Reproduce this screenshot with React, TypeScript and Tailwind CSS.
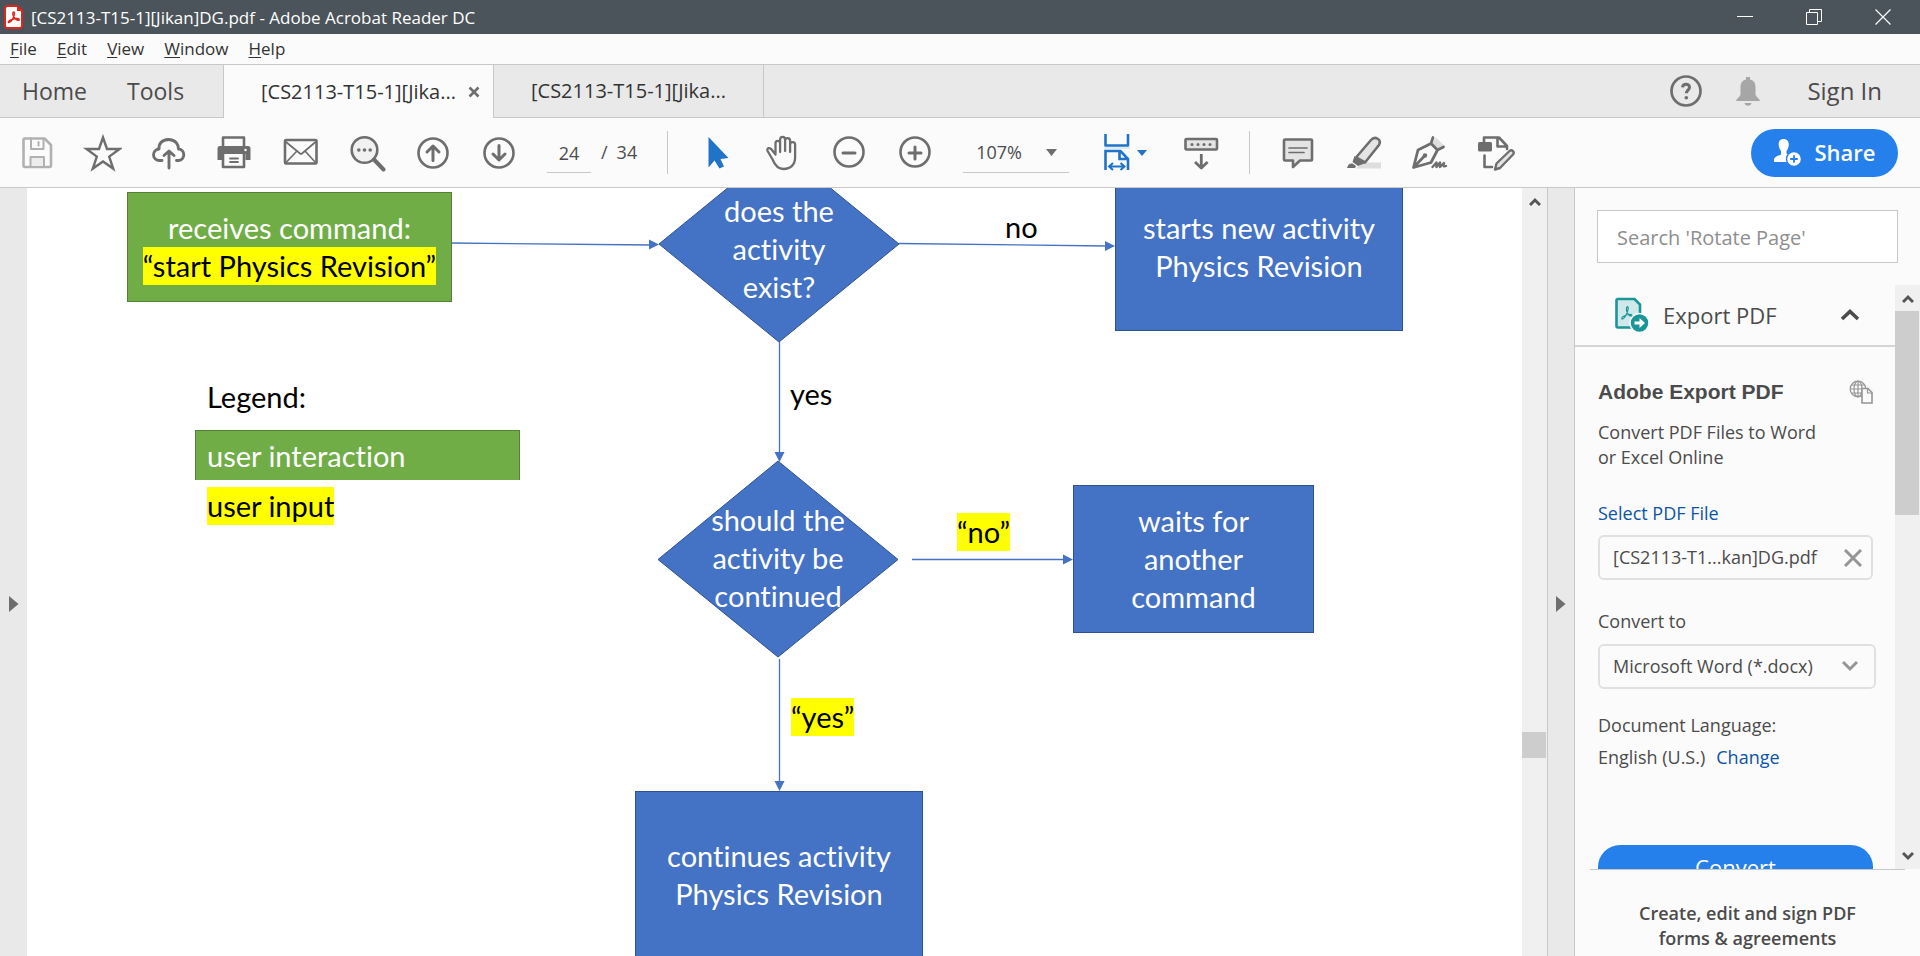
import type { ReactNode } from "react";

const GREY = "#6e6e6e";

function Icon({ children }: { children: ReactNode }) {
  return (
    <svg width="40" height="40" viewBox="0 0 40 40" fill="none" stroke={GREY} strokeWidth="2.6" strokeLinecap="round" strokeLinejoin="round" aria-hidden="true">
      {children}
    </svg>
  );
}

function ToolButton({ label, children }: { label: string; children: ReactNode }) {
  return (
    <button type="button" aria-label={label} className="flex w-[66px] shrink-0 items-center justify-center">
      <Icon>{children}</Icon>
    </button>
  );
}

function TitleBar() {
  return (
    <header className="flex h-[34px] shrink-0 items-center bg-[#4b545a] text-white">
      <svg width="20" height="24" viewBox="0 0 20 24" className="ml-1" aria-hidden="true">
        <path d="M3.500 1h9.500l5 5v14.500a2.500 2.500 0 0 1-2.500 2.500h-12a2.500 2.500 0 0 1-2.500-2.500v-17a2.500 2.500 0 0 1 2.500-2.500z" fill="#fff" stroke="#e3241b" strokeWidth="2" />
        <path d="M13 1v5h5" fill="#e3241b" />
        <path d="M4.500 17.500c-1-1.500 3-3.500 8-4 3-.3 3.500 1.800 1.800 1.900-2.300.1-5.800-4-5.500-7.400.2-1.400 1.700-1.300 1.700.3 0 3-3.500 10-6 9.200z" fill="none" stroke="#e3241b" strokeWidth="1.400" />
      </svg>
      <h1 className="ml-[7px] flex-1 pt-px text-[17px] leading-[24px]">[CS2113-T15-1][Jikan]DG.pdf - Adobe Acrobat Reader DC</h1>
      <button type="button" aria-label="Minimize" className="flex h-full w-[69px] items-center justify-center">
        <svg width="16" height="16" viewBox="0 0 16 16" stroke="#fff"><path d="M0 7.500h16" /></svg>
      </button>
      <button type="button" aria-label="Restore" className="flex h-full w-[69px] items-center justify-center">
        <svg width="16" height="16" viewBox="0 0 16 16" stroke="#fff" fill="none"><path d="M.5 3.500h11v12h-11zM3.500 3.500v-3h12v12h-3.500" /></svg>
      </button>
      <button type="button" aria-label="Close" className="mr-[3px] flex h-full w-[69px] items-center justify-center">
        <svg width="16" height="16" viewBox="0 0 16 16" stroke="#fff" strokeWidth="1.200"><path d="M.5.500l15 15M15.500.500l-15 15" /></svg>
      </button>
    </header>
  );
}

function MenuBar() {
  const items = ["File", "Edit", "View", "Window", "Help"];
  return (
    <nav className="flex h-[31px] shrink-0 items-center gap-5 border-b border-[#c8c8c8] bg-[#fbfbfb] pl-[10px] text-[17px] leading-[24px] text-[#333]">
      {items.map((item) => (
        <button type="button" key={item}>
          <span className="underline underline-offset-2">{item[0]}</span>
          {item.slice(1)}
        </button>
      ))}
    </nav>
  );
}

function TabBar() {
  return (
    <div className="flex h-[53px] shrink-0 bg-[#e9e9e9]">
      <div className="flex w-[224px] items-center gap-10 border-r border-b border-[#c8c8c8] pl-[22px] text-[23px] text-[#4b4b4b]">
        <button type="button">Home</button>
        <button type="button">Tools</button>
      </div>
      <div className="flex w-[270px] items-center border-r border-[#c8c8c8] bg-[#fbfbfb] pl-[37px] text-[20px] text-[#333]">
        <button type="button" className="w-[206px] text-left">[CS2113-T15-1][Jika...</button>
        <button type="button" aria-label="Close tab">
          <svg width="14" height="14" viewBox="0 0 14 14" stroke={GREY} strokeWidth="2.600"><path d="M2.500 2.500l9 9M11.500 2.500l-9 9" /></svg>
        </button>
      </div>
      <div className="flex w-[270px] items-center border-r border-b border-[#c8c8c8] pl-[37px] text-[20px] text-[#333]">
        <button type="button">[CS2113-T15-1][Jika...</button>
      </div>
      <div className="flex flex-1 items-center justify-end border-b border-[#c8c8c8] pr-[38px] text-[24px] font-medium text-[#4b4b4b]">
        <button type="button" aria-label="Help">
          <svg width="32" height="32" viewBox="0 0 32 32" fill="none" stroke={GREY} strokeWidth="2.700">
            <circle cx="16" cy="16" r="14.500" />
            <path d="M12.500 12.300c.3-4 7-4.200 7 0 0 2.600-3.200 3-3.200 6" strokeWidth="3" />
            <circle cx="16.300" cy="22.800" r="1.800" fill={GREY} stroke="none" />
          </svg>
        </button>
        <button type="button" aria-label="Notifications" className="ml-[32px]">
          <svg width="28" height="32" viewBox="0 0 28 32" fill="#a6a6a6">
            <path d="M12 2h4v2.500c4 .8 5.500 3.800 5.500 7.500v7.500c.6 2.500 4 4 4.500 6.500H2c.5-2.500 3.900-4 4.500-6.500v-7.500c0-3.700 1.500-6.700 5.500-7.500zM10.500 28h7c-.5 3.500-6.500 3.500-7 0z" />
          </svg>
        </button>
        <button type="button" className="ml-[45px]">Sign In</button>
      </div>
    </div>
  );
}

function Toolbar() {
  return (
    <div className="flex h-[70px] shrink-0 items-stretch border-b border-[#c8c8c8] bg-[#fbfbfb] pl-[3px] text-[18px] text-[#4b4b4b]">
      <ToolButton label="Save">
        <g stroke="#b1b1b1">
          <path d="M9 5.500h19.500l6.500 6.500v20.500a1.500 1.500 0 0 1-1.500 1.500H9a1.500 1.500 0 0 1-1.500-1.500V7A1.500 1.500 0 0 1 9 5.500z" />
          <path d="M15 5.500v10.500h12.500v-9.500M22.500 9v3.500" strokeWidth="2" />
          <path d="M14.500 33v-9h13.500v9" strokeWidth="2" fill="#ececec" />
        </g>
      </ToolButton>
      <ToolButton label="Add bookmark">
        <path d="M21 4.500l4 11.500h12.500l-10.300 7.600 4 12L21 28.500l-10.200 7.100 4-12L4.500 16h12.500z" strokeWidth="2.400" strokeLinejoin="miter" />
      </ToolButton>
      <ToolButton label="Upload">
        <path d="M14 27.500h-2.500a5.500 5.500 0 0 1-.5-11.500c-.5-4.500 2.500-9.500 9.500-9.500s10 5 10 9.500c7 .5 7 11 0 11.500h-2M21 35v-16.500M16 22.500l5-4.500 5 4.500" strokeWidth="2.900" />
      </ToolButton>
      <ToolButton label="Print">
        <path d="M9 14V4.500h21V14" />
        <path d="M6 13h28a2.500 2.500 0 0 1 2.500 2.500V27h-5v-6h-23v6h-5V15.500A2.500 2.500 0 0 1 6 13z" fill={GREY} stroke="none" />
        <path d="M9 20.500v13.500h21v-13.500" />
        <path d="M16 25.500h8M16 29h8" strokeWidth="1.800" />
        <circle cx="31.500" cy="17" r="1.200" fill="#fff" stroke="none" />
      </ToolButton>
      <ToolButton label="Email">
        <rect x="5" y="7" width="31.500" height="23.500" rx="1" />
        <path d="M6 9l14 11.500q1 .8 2 0L35.500 9M6 29.500l10.500-11M35.500 29.500l-10-11" strokeWidth="1.700" />
      </ToolButton>
      <ToolButton label="Search">
        <circle cx="18.500" cy="17" r="12.800" fill="#f1f1f1" />
        <path d="M28 26.500l9.500 10" strokeWidth="4" />
        <g fill={GREY} stroke="none"><circle cx="12.800" cy="17" r="1.800" /><circle cx="18.500" cy="17" r="1.800" /><circle cx="24.200" cy="17" r="1.800" /></g>
      </ToolButton>
      <ToolButton label="Previous page">
        <circle cx="21" cy="20" r="14.500" />
        <path d="M21 27.500V13.500M15 19l6-6 6 6" strokeWidth="3" />
      </ToolButton>
      <ToolButton label="Next page">
        <circle cx="21" cy="20" r="14.500" />
        <path d="M21 12.500v14M15 21l6 6 6-6" strokeWidth="3" />
      </ToolButton>
      <div className="ml-4 flex items-center">
        <input aria-label="Page number" defaultValue="24" className="mt-px h-[40px] w-[44px] border-b border-[#c8c8c8] bg-transparent text-center outline-none" />
        <span className="ml-[10px]">/</span>
        <span className="ml-[9px]">34</span>
      </div>
      <div className="my-[13px] ml-[30px] w-px bg-[#c8c8c8]" />
      <div className="ml-4 flex">
        <ToolButton label="Select">
          <path d="M11.500 4v30.500l6-7 5 8 4.500-2-3.500-7.500 8-1z" fill="#2074c8" stroke="none" />
        </ToolButton>
        <ToolButton label="Hand">
          <path d="M12.500 21.500V10.500c0-3.400 4.600-3.400 4.600 0V19M17.100 10.500V6.500c0-3.600 5-3.600 5 0V18M22.100 8c0-4 5-3.600 5 0v11M27.100 11.500c0-3.300 5-3.300 5 0v13c0 7-4.500 11.500-11.500 11.500-6 0-9-4.500-11-9.500l-5-8.500c-1.200-3 2-4 4-1.500l3.900 5" strokeWidth="2.300" />
        </ToolButton>
        <ToolButton label="Zoom out">
          <circle cx="20" cy="19" r="14.500" />
          <path d="M14 20h12" strokeWidth="3" />
        </ToolButton>
        <ToolButton label="Zoom in">
          <circle cx="20" cy="19" r="14.500" />
          <path d="M14 20h12M20 14v12" strokeWidth="3" />
        </ToolButton>
      </div>
      <div className="relative ml-[15px] mt-[14px] h-[41px] w-[106px] border-b border-[#c8c8c8]">
        <select aria-label="Zoom level" className="h-full w-full appearance-none bg-transparent pl-[13px] outline-none">
          <option>107%</option>
        </select>
        <svg width="12" height="8" viewBox="0 0 12 8" className="pointer-events-none absolute top-[17px] right-[11px]" fill={GREY}><path d="M0 0h11l-5.500 7z" /></svg>
      </div>
      <button type="button" aria-label="Fit width" className="ml-[28px] flex items-center">
        <svg width="40" height="40" viewBox="0 0 40 40" fill="none" stroke="#2074c8" strokeWidth="2.600">
          <path d="M8.500 1v11.500h22.500V1" strokeLinejoin="round" />
          <path d="M7 15h26" stroke="#d9e6f4" strokeWidth="1.500" />
          <path d="M8.500 37V18h15l7.500 8v11M22.500 18v8h9" />
          <path d="M13 33.500h13M16 30l-4 3.500 4 3.500M23.500 30l4 3.500-4 3.500" strokeWidth="2" />
        </svg>
        <svg width="10" height="8" viewBox="0 0 10 8" fill="#2074c8"><path d="M0 1h10l-5 6z" /></svg>
      </button>
      <div className="ml-[21px] flex">
        <ToolButton label="Scrolling toolbar">
          <rect x="4.500" y="6" width="31.500" height="10.500" rx="1" fill="#e4e4e4" />
          <path d="M20.300 21v13.500M14 29l6.300 6 6.300-6" strokeWidth="2.800" strokeLinecap="butt" />
          <g fill={GREY} stroke="none"><circle cx="11" cy="11.500" r="1.500" /><circle cx="17" cy="11.500" r="1.500" /><circle cx="23" cy="11.500" r="1.500" /><circle cx="29" cy="11.500" r="1.500" /></g>
        </ToolButton>
      </div>
      <div className="my-[13px] ml-[15px] w-px bg-[#c8c8c8]" />
      <div className="ml-[15px] flex">
        <ToolButton label="Comment">
          <path d="M7 6.500h26a1 1 0 0 1 1 1v19a1 1 0 0 1-1 1H22l-7 6.500v-6.500H7a1 1 0 0 1-1-1V7.500a1 1 0 0 1 1-1z" fill="#e4e4e4" />
          <path d="M11 15h18M11 19.500h15" strokeWidth="1.700" />
        </ToolButton>
        <ToolButton label="Highlight">
          <path d="M11 35.500l10-6h16v6z" fill="#dedede" stroke="none" />
          <path d="M12 24.500L27 7c4-4.500 11-.5 8 5L21 29.500z" fill="#e4e4e4" />
          <path d="M10.500 23l10 7.500-6.500 2.500-5.500-4zM3 35c1-4 3-5 5.500-4.500l3.500 2.500-1 2z" fill={GREY} stroke="none" />
        </ToolButton>
        <ToolButton label="Sign">
          <path d="M22 11l4-6.500 9 9-6 3" fill="#dedede" stroke="none" />
          <path d="M23 4.500l-2 6-13 6.500-4.500 17.500 17.500-5 6.500-12.500 6-3M21 10.500l6.500 6.500M4 34l10-10.500" strokeWidth="2.800" />
          <circle cx="15" cy="22.500" r="2.200" fill={GREY} stroke="none" />
          <path d="M22.500 34l4-4.500v4.500l3.500-4.500v4.500l4-4c-1 3-.5 4 2 3" strokeWidth="2.400" />
        </ToolButton>
        <ToolButton label="More tools">
          <rect x="2" y="9" width="14" height="9.500" rx="1.500" fill={GREY} stroke="none" />
          <path d="M8 9V4.500h15l8 8.500v3M21.500 5v8.500h8.500M8.500 22.500v11.500h7.500" />
          <path d="M19 36.500l1.500-6 13-12.500c2.500-2 5.500 1 3.500 3.500l-13 13.500z" fill="#e4e4e4" strokeWidth="2.400" />
        </ToolButton>
      </div>
      <button type="button" className="my-auto mr-[22px] ml-auto flex h-[48px] w-[147px] items-center justify-center gap-3 rounded-full bg-[#2680eb] text-[22px] font-semibold text-white">
        <svg width="29" height="28" viewBox="0 0 29 28" aria-hidden="true">
          <path d="M10.500 0c7 0 6 8.500 3 12v2.500l3 1.500v7H1v-2c0-3.500 4-4 7-5.500V12C5 8.500 4 0 10.500 0z" fill="#fff" />
          <circle cx="21" cy="20" r="7.500" fill="#fff" stroke="#2680eb" strokeWidth="1.400" />
          <path d="M21 16.200v7.600M17.200 20h7.600" stroke="#2680eb" strokeWidth="1.800" />
        </svg>
        Share
      </button>
    </div>
  );
}

function Chevron({ up }: { up?: boolean }) {
  return (
    <svg width="12" height="10" viewBox="0 0 12 10" fill="none" stroke="#555" strokeWidth="3" aria-hidden="true">
      <path d={up ? "M1 8l5-5 5 5" : "M1 2l5 5 5-5"} />
    </svg>
  );
}

function Diagram() {
  return (
    <div className="relative min-w-0 flex-1 overflow-hidden bg-white font-[Lato,sans-serif] text-[29px] leading-[38px] [font-variant-ligatures:none]">
      <svg width="1495" height="768" viewBox="0 0 1495 768" className="absolute top-0 left-0" fill="#4472c4" aria-hidden="true">
        <g stroke="#2f528f">
          <path d="M632 56L752-42L872 56L752 154Z" />
          <path d="M631 371.500L751 273L871 371.500L751 469Z" />
        </g>
        <g stroke="#4472c4" strokeWidth="1.300">
          <path d="M424 55L624 57M872 55.500L1080 58M752.500 154V266M885 371.500H1038M752.500 471V596" />
        </g>
        <path d="M622 51.500l10 5-10 5zM1078 53l10 5-10 5zM747.500 264h10l-5 10zM1036 366.500l10 5-10 5zM747.500 593h10l-5 10z" />
      </svg>
      <div className="absolute top-[4px] left-[100px] flex h-[110px] w-[325px] flex-col items-center justify-center border border-[#548235] bg-[#70ad47] text-white">
        <span>receives command:</span>
        <mark className="bg-[#ffff00] text-black">“start Physics Revision”</mark>
      </div>
      <p className="absolute top-[4px] left-[692px] w-[120px] text-center text-white">does the activity exist?</p>
      <p className="absolute top-[20px] left-[978px]">no</p>
      <div className="absolute top-[-25px] left-[1088px] flex h-[168px] w-[288px] items-center justify-center border border-[#2f528f] bg-[#4472c4] text-center text-white">
        starts new activity<br />Physics Revision
      </div>
      <p className="absolute top-[187px] left-[763px]">yes</p>
      <p className="absolute top-[190px] left-[180px]">Legend:</p>
      <div className="absolute top-[242px] left-[168px] flex h-[50px] w-[325px] items-center border border-b-0 border-[#548235] bg-[#70ad47] pl-[11px] text-white">
        user interaction
      </div>
      <mark className="absolute top-[299px] left-[180px] bg-[#ffff00] text-black">user input</mark>
      <p className="absolute top-[313px] left-[671px] w-[160px] text-center text-white">should the activity be continued</p>
      <mark className="absolute top-[325px] left-[930px] bg-[#ffff00] text-black">“no”</mark>
      <div className="absolute top-[297px] left-[1046px] flex h-[148px] w-[241px] items-center justify-center border border-[#2f528f] bg-[#4472c4] px-12 text-center text-white">
        waits for another command
      </div>
      <mark className="absolute top-[510px] left-[764px] bg-[#ffff00] text-black">“yes”</mark>
      <div className="absolute top-[603px] left-[608px] flex h-[168px] w-[288px] items-center justify-center border border-[#2f528f] bg-[#4472c4] text-center text-white">
        continues activity<br />Physics Revision
      </div>
    </div>
  );
}

function DocumentScrollbar() {
  return (
    <div className="flex w-[25px] shrink-0 flex-col items-center bg-[#f0f0f0] pt-[9px]">
      <Chevron up />
      <div className="mt-[525px] h-[26px] w-[24px] shrink-0 self-start bg-[#cdcdcd]" />
    </div>
  );
}

function SidePanel() {
  return (
    <aside className="flex w-[345px] shrink-0 flex-col bg-[#fbfbfb] text-[18px] leading-[25px] text-[#4b4b4b]">
      <div className="px-[22px] pt-[22px] pb-[22px]">
        <input aria-label="Search tools" placeholder="Search 'Rotate Page'" className="h-[53px] w-full border border-[#c8c8c8] bg-white px-[19px] pt-[2px] text-[20px] outline-none placeholder:text-[#8e8e8e]" />
      </div>
      <div className="flex h-[584px] shrink-0">
        <div className="min-w-0 flex-1 overflow-hidden">
          <button type="button" className="flex h-[62px] w-full items-center border-b-2 border-[#d5d5d5] pr-[35px] pl-[39px] text-[22px]">
            <svg width="36" height="36" viewBox="0 0 36 36" fill="none" aria-hidden="true">
              <path d="M4 2h16.500l5.500 5.500V30.500H4a1.500 1.500 0 0 1-1.500-1.500V3.500A1.500 1.500 0 0 1 4 2z" fill="#cfe9ea" stroke="#1a9699" strokeWidth="2.600" />
              <path d="M8 22c-1-2 3-4 7-4.500 3-.4 4 1.500 2 1.600-2.500 0-5-4.500-4.500-8 .3-2.500 2-1.500 1.700.5-.5 4-4 11-6.200 10.400z" stroke="#1a9699" strokeWidth="1.200" />
              <circle cx="25.500" cy="26" r="9.500" fill="#1a9699" stroke="#fbfbfb" strokeWidth="1.500" />
              <path d="M20.500 24.500h5v-3.500l5.500 5-5.500 5v-3.500h-5z" fill="#fff" />
            </svg>
            <span className="ml-[13px]">Export PDF</span>
            <svg width="20" height="14" viewBox="0 0 20 14" className="ml-auto" fill="none" stroke="#4b4b4b" strokeWidth="3.600" aria-hidden="true"><path d="M2 11l8-7.500 8 7.500" /></svg>
          </button>
          <div className="pr-[22px] pl-[23px]">
            <div className="mt-[32px] flex items-center justify-between">
              <h2 className="font-[Liberation_Sans,sans-serif] text-[21px] leading-[26px] font-bold">Adobe Export PDF</h2>
              <svg width="24" height="24" viewBox="0 0 24 24" fill="none" stroke="#959595" strokeWidth="1.200" aria-hidden="true">
                <circle cx="9" cy="9" r="7.800" />
                <ellipse cx="9" cy="9" rx="4" ry="7.800" />
                <path d="M9 1v16M1 9h16M2.500 5h13M2.500 13h13" />
                <path d="M13 8.500h6l4 4v10.500h-10z" fill="#fbfbfb" strokeWidth="1.600" />
                <path d="M18.500 8.500v4.500h4.500" />
              </svg>
            </div>
            <p className="mt-[15px]">Convert PDF Files to Word<br />or Excel Online</p>
            <a href="#select" className="mt-[31px] block text-[#0d54a5]">Select PDF File</a>
            <div className="mt-[9px] flex h-[45px] items-center rounded-md border-2 border-[#e0e0e0] pr-[9px] pl-[13px]">
              <input aria-label="Selected file" readOnly value="[CS2113-T1...kan]DG.pdf" className="w-full min-w-0 bg-transparent outline-none" />
              <button type="button" aria-label="Remove file">
                <svg width="18" height="18" viewBox="0 0 18 18" stroke="#959595" strokeWidth="3"><path d="M1 1l16 16M17 1L1 17" /></svg>
              </button>
            </div>
            <label htmlFor="format" className="mt-[29px] block">Convert to</label>
            <div className="relative mt-[10px] -mr-[3px] h-[45px]">
              <select id="format" className="h-full w-full appearance-none rounded-md border-2 border-[#e0e0e0] bg-transparent pl-[13px] outline-none">
                <option>Microsoft Word (*.docx)</option>
              </select>
              <svg width="16" height="12" viewBox="0 0 16 12" className="pointer-events-none absolute top-[16px] right-[18px]" fill="none" stroke="#959595" strokeWidth="3"><path d="M1 2l7 7 7-7" /></svg>
            </div>
            <p className="mt-5 leading-[32px]">
              Document Language:<br />
              English (U.S.)<a href="#language" className="ml-[11px] text-[#0d54a5]">Change</a>
            </p>
            <button type="button" className="mt-[72px] h-[44px] w-full rounded-full bg-[#2680eb] text-[22px] leading-[40px] text-white">Convert</button>
          </div>
        </div>
        <div className="flex w-[25px] flex-col items-center bg-[#f0f0f0]">
          <div className="flex h-[26px] items-center pt-[2px]"><Chevron up /></div>
          <div className="h-[204px] w-[24px] self-start bg-[#cdcdcd]" />
          <div className="mt-auto flex h-[26px] items-center"><Chevron /></div>
        </div>
      </div>
      <div className="mr-[15px] ml-[15px] flex-1 border-t border-[#c8c8c8] pt-[31px] text-center font-semibold">
        Create, edit and sign PDF<br />forms &amp; agreements
      </div>
    </aside>
  );
}

export default function App() {
  return (
    <div className="flex h-screen flex-col overflow-hidden bg-[#fbfbfb] font-[Open_Sans,Noto_Sans,sans-serif]">
      <TitleBar />
      <MenuBar />
      <TabBar />
      <Toolbar />
      <main className="flex min-h-0 flex-1">
        <button type="button" aria-label="Show navigation pane" className="flex w-[27px] shrink-0 items-center justify-center bg-[#e9e9e9] pt-[64px]">
          <svg width="10" height="16" viewBox="0 0 10 16" fill={GREY}><path d="M0 0l9.500 8L0 16z" /></svg>
        </button>
        <Diagram />
        <DocumentScrollbar />
        <button type="button" aria-label="Hide tools pane" className="flex w-[28px] shrink-0 items-center justify-center border-x border-[#c8c8c8] bg-[#e9e9e9] pt-[64px]">
          <svg width="10" height="16" viewBox="0 0 10 16" fill={GREY}><path d="M0 0l9.500 8L0 16z" /></svg>
        </button>
        <SidePanel />
      </main>
    </div>
  );
}
